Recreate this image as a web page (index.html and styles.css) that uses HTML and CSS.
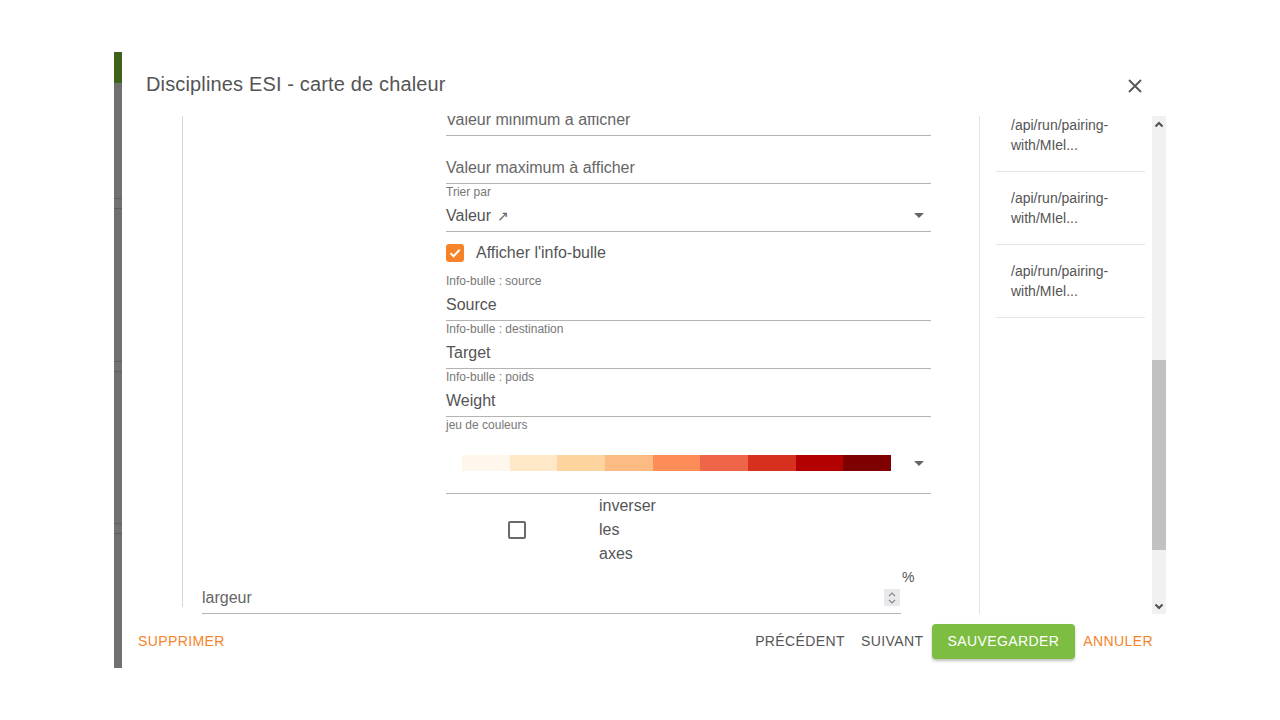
FILE: index.html
```html
<!DOCTYPE html>
<html lang="fr">
<head>
<meta charset="utf-8">
<title>Disciplines ESI - carte de chaleur</title>
<link rel="stylesheet" href="styles.css">
</head>
<body>
<div class="page">
  <div class="strip"></div>
  <div class="dialog">
    <div class="header">
      <h1 class="title">Disciplines ESI - carte de chaleur</h1>
      <button class="close" aria-label="Fermer">
        <svg width="14" height="14" viewBox="0 0 14 14"><path d="M1 1 L13 13 M13 1 L1 13" stroke="#555" stroke-width="1.8" fill="none"/></svg>
      </button>
    </div>
    <div class="body">
      <div class="main">
        <div class="step">
          <div class="step-inner">
            <div class="form-col">
              <div class="field">
                <div class="field-label"></div>
                <div class="field-input placeholder">Valeur minimum à afficher</div>
              </div>
              <div class="field">
                <div class="field-label"></div>
                <div class="field-input placeholder">Valeur maximum à afficher</div>
              </div>
              <div class="field">
                <div class="field-label">Trier par</div>
                <div class="field-input">
                  <span>Valeur <span class="arrow-ne">↗</span></span>
                  <span class="caret"></span>
                </div>
              </div>
              <div class="check-row">
                <span class="cb cb-on">
                  <svg width="14" height="14" viewBox="0 0 14 14"><path d="M2.5 7.2 L5.6 10.2 L11.6 3.8" stroke="#fff" stroke-width="2" fill="none"/></svg>
                </span>
                <span class="check-label">Afficher l'info-bulle</span>
              </div>
              <div class="field">
                <div class="field-label">Info-bulle : source</div>
                <div class="field-input">Source</div>
              </div>
              <div class="field">
                <div class="field-label">Info-bulle : destination</div>
                <div class="field-input">Target</div>
              </div>
              <div class="field">
                <div class="field-label">Info-bulle : poids</div>
                <div class="field-input">Weight</div>
              </div>
              <div class="color-field">
                <div class="field-label">jeu de couleurs</div>
                <div class="color-select">
                  <div class="palette">
                    <span class="sw sw1"></span><span class="sw sw2"></span><span class="sw sw3"></span>
                    <span class="sw sw4"></span><span class="sw sw5"></span><span class="sw sw6"></span>
                    <span class="sw sw7"></span><span class="sw sw8"></span><span class="sw sw9"></span>
                  </div>
                  <span class="caret"></span>
                </div>
              </div>
              <div class="invert-row">
                <span class="cb cb-off"></span>
                <span class="invert-label">inverser les axes</span>
              </div>
            </div>
            <div class="largeur-row">
              <div class="field wide">
                <div class="field-label"></div>
                <div class="field-input placeholder">largeur
                  <span class="spinner">
                    <svg width="10" height="14" viewBox="0 0 10 14"><path d="M2 5 L5 2 L8 5 M2 9 L5 12 L8 9" stroke="#888" stroke-width="1.2" fill="none"/></svg>
                  </span>
                </div>
              </div>
              <span class="suffix">%</span>
            </div>
          </div>
        </div>
      </div>
      <div class="side">
        <div class="list">
          <div class="item">/api/run/pairing-with/MIel...</div>
          <div class="item">/api/run/pairing-with/MIel...</div>
          <div class="item">/api/run/pairing-with/MIel...</div>
        </div>
        <div class="scrollbar">
          <span class="sb-arrow">
            <svg width="10" height="8" viewBox="0 0 10 8"><path d="M1.5 5.5 L5 2 L8.5 5.5" stroke="#505050" stroke-width="2" fill="none"/></svg>
          </span>
          <span class="sb-gap"></span>
          <span class="sb-thumb"></span>
          <span class="sb-rest"></span>
          <span class="sb-arrow">
            <svg width="10" height="8" viewBox="0 0 10 8"><path d="M1.5 2.5 L5 6 L8.5 2.5" stroke="#505050" stroke-width="2" fill="none"/></svg>
          </span>
        </div>
      </div>
    </div>
    <div class="footer">
      <button class="btn btn-orange">Supprimer</button>
      <span class="spacer"></span>
      <button class="btn">Précédent</button>
      <button class="btn">Suivant</button>
      <button class="btn btn-save">Sauvegarder</button>
      <button class="btn btn-orange">Annuler</button>
    </div>
  </div>
</div>
</body>
</html>
```

FILE: styles.css
```css
html, body {
  margin: 0;
  padding: 0;
  background: #ffffff;
  font-family: "Liberation Sans", Arial, sans-serif;
  color: #555;
}

.page {
  display: flex;
  padding: 52px 0 0 114px;
}

.strip {
  width: 8px;
  height: 616px;
  background: linear-gradient(to bottom,
    #3f611b 0, #3f611b 31px,
    #707070 31px, #707070 146px,
    #5e5e5e 146px, #5e5e5e 147px,
    #727272 147px, #727272 156px,
    #5e5e5e 156px, #5e5e5e 157px,
    #707070 157px, #707070 309px,
    #5e5e5e 309px, #5e5e5e 310px,
    #727272 310px, #727272 319px,
    #5e5e5e 319px, #5e5e5e 320px,
    #707070 320px, #707070 471px,
    #5e5e5e 471px, #5e5e5e 472px,
    #727272 472px, #727272 481px,
    #5e5e5e 481px, #5e5e5e 482px,
    #707070 482px, #707070 100%);
}

.dialog {
  width: 1044px;
  height: 616px;
  background: #fff;
  border-radius: 4px;
  display: flex;
  flex-direction: column;
}

.header {
  height: 64px;
  display: flex;
  align-items: center;
  justify-content: space-between;
  padding: 0 24px;
  flex: none;
}

.title {
  margin: 0;
  font-size: 20px;
  letter-spacing: 0.15px;
  font-weight: normal;
  color: #555;
}

.close {
  border: none;
  background: none;
  padding: 0;
  width: 14px;
  height: 14px;
  margin-top: 4px;
  display: flex;
}

.body {
  height: 498px;
  display: flex;
  flex: none;
}

.main {
  width: 857px;
  height: 498px;
  padding: 0 0 7px 60px;
  box-sizing: border-box;
  overflow: hidden;
  flex: none;
}

.step {
  height: 100%;
  display: flow-root;
  border-left: 1px solid #d6d6d6;
}

.step-inner {
  margin-top: -28px;
  padding-left: 19px;
}

.form-col {
  margin-left: 244px;
  width: 485px;
}

.field {
  height: 48px;
  display: flex;
  flex-direction: column;
}

.field-label {
  height: 16px;
  font-size: 12px;
  line-height: 16px;
  color: #777;
}

.field-input {
  height: 31px;
  border-bottom: 1px solid #b3b3b3;
  display: flex;
  align-items: center;
  justify-content: space-between;
  font-size: 16px;
  color: #555;
}

.placeholder {
  color: #666;
}

.arrow-ne {
  font-size: 14px;
  color: #666;
  margin-left: 1px;
}

.caret {
  width: 0;
  height: 0;
  border-left: 5px solid transparent;
  border-right: 5px solid transparent;
  border-top: 5px solid #666;
  margin-right: 7px;
}

.check-row {
  height: 41px;
  display: flex;
  align-items: center;
  gap: 12px;
}

.check-label {
  font-size: 16px;
  color: #555;
}

.cb {
  width: 18px;
  height: 18px;
  box-sizing: border-box;
  display: flex;
  align-items: center;
  justify-content: center;
  flex: none;
}

.cb-on {
  background: #f6832a;
  border-radius: 3px;
}

.cb-off {
  border: 2px solid #6a6a6a;
  border-radius: 2px;
}

.color-field {
  height: 77px;
  display: flex;
  flex-direction: column;
}

.color-select {
  height: 60px;
  border-bottom: 1px solid #b3b3b3;
  display: flex;
  align-items: center;
  justify-content: space-between;
}

.palette {
  display: flex;
  margin-left: 16px;
  width: 429px;
  height: 16px;
}

.sw {
  flex: 1;
}
.sw1 { background: #fff7ec; }
.sw2 { background: #fee8c8; }
.sw3 { background: #fdd49e; }
.sw4 { background: #fdbb84; }
.sw5 { background: #fc8d59; }
.sw6 { background: #ef6548; }
.sw7 { background: #d7301f; }
.sw8 { background: #b30000; }
.sw9 { background: #7f0000; }

.invert-row {
  height: 72px;
  display: flex;
  align-items: center;
}

.invert-row .cb-off {
  margin-left: 62px;
}

.invert-label {
  margin-left: 73px;
  width: min-content;
  font-size: 16px;
  line-height: 24px;
  color: #555;
}

.largeur-row {
  display: flex;
  align-items: flex-start;
}

.wide {
  width: 699px;
}

.spinner {
  width: 16px;
  height: 17px;
  background: #e9e9ed;
  display: flex;
  align-items: center;
  justify-content: center;
  margin-right: 1px;
}

.suffix {
  font-size: 14px;
  line-height: 16px;
  padding-top: 3px;
  margin-left: 1px;
  color: #555;
}

.side {
  width: 187px;
  border-left: 1px solid #e3e3e3;
  box-sizing: border-box;
  display: flex;
  overflow: hidden;
  flex: none;
}

.list {
  width: 149px;
  margin-top: -17px;
  margin-left: 16px;
  flex: none;
}

.item {
  height: 73px;
  box-sizing: border-box;
  padding: 16px 4px 0 15px;
  border-bottom: 1px solid #e6e6e6;
  font-size: 14px;
  line-height: 20px;
  color: #555;
}

.scrollbar {
  width: 14px;
  margin-left: 7px;
  background: #f1f1f1;
  display: flex;
  flex-direction: column;
  flex: none;
}

.sb-arrow {
  height: 17px;
  display: flex;
  align-items: center;
  justify-content: center;
  flex: none;
}

.sb-gap {
  height: 227px;
  flex: none;
}

.sb-thumb {
  height: 190px;
  background: #c1c1c1;
  flex: none;
}

.sb-rest {
  flex: 1;
}

.footer {
  height: 54px;
  display: flex;
  align-items: center;
  padding: 0 5px 0 8px;
  flex: none;
}

.spacer {
  flex: 1;
}

.btn {
  font-family: "Liberation Sans", Arial, sans-serif;
  font-size: 14px;
  letter-spacing: 0.4px;
  text-transform: uppercase;
  background: none;
  border: none;
  padding: 0 8px;
  height: 36px;
  color: #555;
  cursor: pointer;
}

.btn-orange {
  color: #f6832a;
}

.btn-save {
  background: #7cbd42;
  color: #fff;
  height: 35px;
  padding: 0 16px;
  border-radius: 4px;
  box-shadow: 0 2px 3px rgba(0, 0, 0, 0.25);
}
```
